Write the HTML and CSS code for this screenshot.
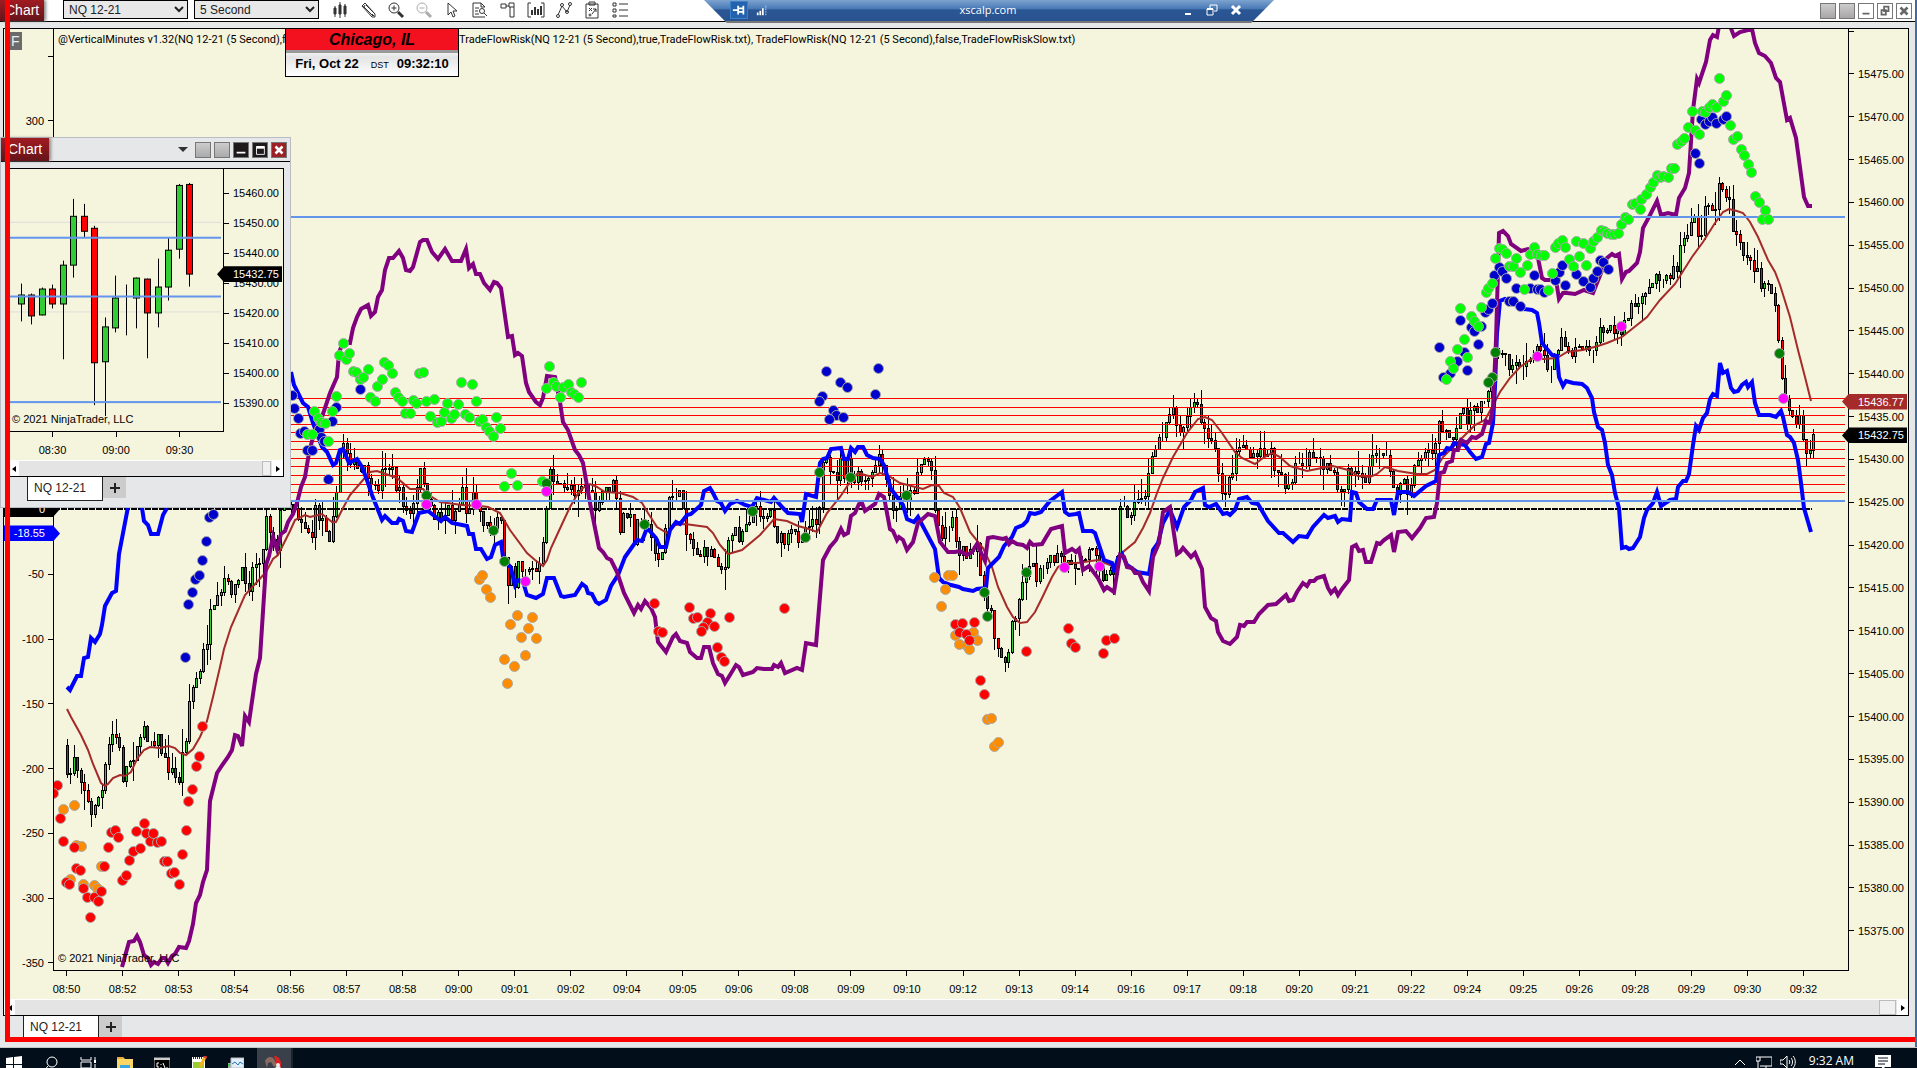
FILE: index.html
```html
<!DOCTYPE html>
<html lang="en">
  <head>
    <meta charset="UTF-8" />
    <meta name="viewport" content="width=device-width, initial-scale=1.0" />
    <title>NQ 12-21 Chart</title>
    <link rel="stylesheet" href="styles.css">
  </head>
  <body>
    <main class="window">
      <header class="titlebar">
        <span class="badge">Chart</span>
        <select class="instrument" aria-label="Instrument"><option>NQ 12-21</option></select>
        <select class="interval" aria-label="Interval"><option>5 Second</option></select>
        <div class="tools">
          <button aria-label="Bar style"><svg viewBox="0 0 18 18"><path d="M4 5v11M9 1v16M14 3v13" /><path d="M3 7h2v6H3zM8 4h2v9H8zM13 5h2v8h-2z" fill="#333" /></svg></button>
          <button aria-label="Drawing tools"><svg viewBox="0 0 18 18"><path d="M3 5l3-3 10 11v3h-3zM5 6l9 9M7 4l9 9M3 5l2 1 1-2M13 13l2 2" /></svg></button>
          <button aria-label="Zoom in"><svg viewBox="0 0 18 18"><circle cx="7" cy="7" r="5" /><path d="M4.500 7h5M7 4.500v5" /><path d="M11 11l5 5" stroke-width="3" /></svg></button>
          <button aria-label="Zoom out" disabled><svg viewBox="0 0 18 18"><circle cx="7" cy="7" r="5" /><path d="M4.500 7h5" /><path d="M11 11l5 5" stroke-width="3" /></svg></button>
          <button aria-label="Cursor"><svg viewBox="0 0 18 18"><path d="M5 2v12l3-3 2 5 2-1-2-5h4z" /></svg></button>
          <button aria-label="Data box"><svg viewBox="0 0 18 18"><path d="M14 6l-4-4H2v14h12M10 2v4h4M4 7h4M4 10h3M4 13h4" /><circle cx="11" cy="10" r="2.500" /><path d="M13 12l3 3" /></svg></button>
          <button aria-label="Chart trader"><svg viewBox="0 0 18 18"><path d="M10 2h5v14h-4V6h-1zM2 3h5v4H2zM7 5h3M11 6h4" /></svg></button>
          <button aria-label="Panel"><svg viewBox="0 0 18 18"><path d="M4 2H1v14h3M14 2h3v14h-3" /><path d="M5 14V9M8 14V6M11 14V8M14 14V5" stroke-width="2" /></svg></button>
          <button aria-label="Indicators"><svg viewBox="0 0 18 18"><path d="M3 14l4-9 5 6 3-7" /><circle cx="3" cy="15" r="1.500" /><circle cx="7" cy="4" r="1.500" /><circle cx="12" cy="11" r="1.500" /><circle cx="15" cy="3" r="1.500" /></svg></button>
          <button aria-label="Strategies"><svg viewBox="0 0 18 18"><path d="M3 3h12v14H3zM6 1h6v3H6zM6 7l3 3M9 7l-3 3M9 13l4-5M10 8h3v3" /><circle cx="7" cy="14" r="1" /></svg></button>
          <button aria-label="Properties"><svg viewBox="0 0 18 18"><path d="M2 2h3v3H2zM2 8h3v3H2zM2 14h3v2H2zM8 3h9M8 9h9M8 15h9" /></svg></button>
        </div>
        <div class="window-buttons light">
          <button class="blank" aria-label="Link instrument"></button>
          <button class="blank" aria-label="Link interval"></button>
          <button aria-label="Minimize"><svg viewBox="0 0 16 16"><path d="M4 11h8" stroke-width="2" /></svg></button>
          <button aria-label="Restore"><svg viewBox="0 0 16 16"><path d="M7 3h5v5H7zM4 7h5v5H4z" stroke-width="2" /></svg></button>
          <button aria-label="Close"><svg viewBox="0 0 16 16"><path d="M4 4l8 8M12 4l-8 8" stroke-width="3" /></svg></button>
        </div>
      </header>

      <section class="panel">
        <div class="grid">
          <div class="axis-left" id="leftAxis">
            <span class="panel-mark">F</span>
            <span class="tag tag-left zero">0</span>
            <span class="tag tag-left current">-18.55</span>
          </div>
          <div class="plot">
            <svg id="mainPlot" viewBox="54 29 1794 941" preserveAspectRatio="none"></svg>
            <p class="indicators">
              <span class="first">@VerticalMinutes v1.32(NQ 12-21 (5 Second),fa</span>
              <span>TradeFlowRisk(NQ 12-21 (5 Second),true,TradeFlowRisk.txt), TradeFlowRisk(NQ 12-21 (5 Second),false,TradeFlowRiskSlow.txt)</span>
            </p>
            <p class="copyright">© 2021 NinjaTrader, LLC</p>
          </div>
          <div class="axis-right" id="rightAxis">
            <span class="tag tag-right average">15436.77</span>
            <span class="tag tag-right last">15432.75</span>
          </div>
        </div>
        <div class="axis-bottom" id="timeAxis"></div>
        <div class="scroll">
          <button aria-label="Scroll left"><i class="arrow left"></i></button>
          <span class="thumb"></span>
          <button aria-label="Scroll right"><i class="arrow right"></i></button>
        </div>
      </section>

      <nav class="tabs">
        <button class="tab">NQ 12-21</button>
        <button class="add" aria-label="Add tab"><svg viewBox="0 0 12 12"><path d="M6 1v10M1 6h10" /></svg></button>
      </nav>

      <aside class="clock">
        <h2>Chicago, IL</h2>
        <p><b>Fri, Oct 22</b> <small>DST</small> <b>09:32:10</b></p>
      </aside>

      <section class="window floating">
        <header class="titlebar">
          <span class="badge">Chart</span>
          <div class="window-buttons dark">
            <i class="caret"></i>
            <button class="blank" aria-label="Link instrument"></button>
            <button class="blank" aria-label="Link interval"></button>
            <button aria-label="Minimize"><svg viewBox="0 0 16 16"><path d="M3 11h10" stroke-width="2" /></svg></button>
            <button aria-label="Maximize"><svg viewBox="0 0 16 16"><path d="M4 4h9v9H4z" /><path d="M4 5h9" stroke-width="3" /></svg></button>
            <button class="close" aria-label="Close"><svg viewBox="0 0 16 16"><path d="M4 4l8 8M12 4l-8 8" stroke-width="3" /></svg></button>
          </div>
        </header>
        <div class="panel">
          <div class="grid">
            <div class="plot">
              <svg id="smallPlot" viewBox="8 169 215 263" preserveAspectRatio="none"></svg>
              <p class="copyright">© 2021 NinjaTrader, LLC</p>
            </div>
            <div class="axis-right" id="smallRightAxis">
              <span class="tag tag-right last">15432.75</span>
            </div>
          </div>
          <div class="axis-bottom" id="smallTimeAxis"></div>
          <div class="scroll">
            <button aria-label="Scroll left"><i class="arrow left"></i></button>
            <span class="thumb"></span>
            <button aria-label="Scroll right"><i class="arrow right"></i></button>
          </div>
        </div>
        <nav class="tabs">
          <button class="tab">NQ 12-21</button>
          <button class="add" aria-label="Add tab"><svg viewBox="0 0 12 12"><path d="M6 1v10M1 6h10" /></svg></button>
        </nav>
      </section>

      <div class="frame"></div>

      <div class="remote-bar">
        <button class="pin" aria-label="Pin"><svg viewBox="0 0 16 16"><path d="M1 8h6M7 3v10M7 6h6M7 10h6M13 3v10" stroke-width="2" /></svg></button>
        <svg class="signal" viewBox="0 0 14 14"><path d="M2 13v-3M5 13V8M8 13V5" stroke-width="2" /><path d="M11.500 13V1" stroke-dasharray="1 1" /></svg>
        <span class="host">xscalp.com</span>
        <button aria-label="Minimize"><svg viewBox="0 0 12 12"><path d="M3 10h6" stroke-width="2" /></svg></button>
        <button aria-label="Restore"><svg viewBox="0 0 12 12"><path d="M4 4V1h7v6H8" /><path d="M1 5h6v6H1z" /><path d="M1 5h6" stroke-width="2" /></svg></button>
        <button aria-label="Close"><svg viewBox="0 0 12 12"><path d="M2 2l8 8M10 2l-8 8" stroke-width="3" /></svg></button>
      </div>
    </main>

    <footer class="taskbar">
      <div class="apps">
        <button aria-label="Start"><svg viewBox="0 0 16 16"><path d="M0 2l7-1v7H0zM8 1l8-1v8H8zM0 9h7v7l-7-1zM8 9h8v7H8z" fill="#fff" /></svg></button>
        <button aria-label="Search"><svg viewBox="0 0 16 16"><circle cx="9" cy="6" r="5" class="line" /><path d="M5 10l-5 6" class="line" /></svg></button>
        <button aria-label="Task view"><svg viewBox="0 0 16 16"><path d="M1 1v3h10V1M1 6h10v6H1zM1 16v-2h10v2M15 1v3M15 8v8" class="line" /><path d="M14 4h2v3h-2z" fill="#fff" /></svg></button>
        <button aria-label="File Explorer"><svg viewBox="0 0 16 16"><path d="M0 1h6l2 2h8v13H0z" fill="#fbd667" /><path d="M0 1h6l1 2H0z" fill="#e6a93a" /><path d="M3 9h10v7h-3v-4H6v4H3z" fill="#35a7e2" /></svg></button>
        <button aria-label="Command Prompt"><svg viewBox="0 0 16 16"><path d="M0 2h16v14H0z" fill="#000" stroke="#bbb" /><path d="M0 2h16v2H0z" fill="#ccc" /><path d="M5 7H3v4h2M7 8v1M7 11v1M9 7l2 5M12 12h2" stroke="#fff" fill="none" /></svg></button>
        <button aria-label="Notepad"><svg viewBox="0 0 16 16"><path d="M1 1h13v15H1z" fill="#fff" /><path d="M2 6h11v10H2z" fill="#9c3" /><path d="M2 2h11" stroke="#333" stroke-dasharray="1 1" stroke-width="2" /><path d="M14 1l-5 10" stroke="#f5b21b" stroke-width="3" /><path d="M15 0l-1 2" stroke="#d33" stroke-width="3" /></svg></button>
        <button aria-label="Monitor"><svg viewBox="0 0 16 16"><path d="M0 7h4v9H0z" fill="#9aa" /><path d="M0 8h2v2H0z" fill="#3c3" /><path d="M3 2h13v10H3z" fill="#dfeefa" stroke="#bbb" /><path d="M4 8l3-2 3 3 2-3 3 2" stroke="#27a" fill="none" /><path d="M5 14h9v2H5z" fill="#ccc" /></svg></button>
        <button class="running" aria-label="NinjaTrader"><svg viewBox="0 0 16 16"><path d="M0 5c2-5 7-5 9-2l3 6-3 2-3-5-3 1-1 5z" fill="#8b6a60" /><path d="M9 0c5 0 8 5 7 11l-3 2z" fill="#d22" /><circle cx="13" cy="9" r="2" fill="#eee" /><circle cx="13" cy="13" r="3" fill="#eee" /></svg></button>
      </div>
      <div class="tray">
        <svg viewBox="0 0 16 16"><path d="M3 11l5-5 5 5" class="line" /></svg>
        <svg viewBox="0 0 16 16"><path d="M4 3h12v9H4M10 12v4M6 15h9M0 3h4v4H0zM2 7v9" class="line" /></svg>
        <svg viewBox="0 0 16 16"><path d="M0 6h3l4-4v12l-4-4H0zM9 6c1 1 1 3 0 4M11 4c2 2 2 6 0 8M13 2c3 3 3 9 0 12" class="line" /></svg>
        <time>9:32 AM</time>
        <svg class="notice" viewBox="0 0 16 16"><path d="M0 1h16v12h-6l-3 3v-3H0z" fill="#fff" /><path d="M3 4h10M3 7h10M3 10h7" stroke="#020e1a" /></svg>
      </div>
    </footer>

    <script src="chart.js"></script>
  </body>
</html>
```
FILE: styles.css
```css
* {
  box-sizing: border-box;
}
body {
  margin: 0;
  height: 100vh;
  display: flex;
  flex-direction: column;
  overflow: hidden;
  font-family: "Liberation Sans", Arial, sans-serif;
  font-size: 11px;
  color: #000;
  background: #020e1a;
}
p,
h2 {
  margin: 0;
}
button {
  border: none;
  padding: 0;
  background: none;
  font: inherit;
}
svg {
  display: block;
}

/* chart windows */
.window {
  position: relative;
  flex: 1;
  min-height: 0;
  display: flex;
  flex-direction: column;
  background: #e6e7e8;
  border-right: 2px solid #3d6f9e;
}
.titlebar {
  display: flex;
  align-items: center;
  height: 22px;
  background: #fff;
  border-bottom: 1px solid #000;
}
.badge {
  width: 44px;
  height: 21px;
  padding-left: 5px;
  line-height: 20px;
  font-size: 14px;
  color: #fff;
  background: linear-gradient(#a01c22, #64141a);
  box-shadow: 2px 0 3px #888;
}
.titlebar select {
  height: 19px;
  margin-right: 6px;
  margin-bottom: 2px;
  padding: 0 1px;
  border: 1px solid #000;
  border-radius: 0;
  background: #e8e8e8;
  font-family: inherit;
  font-size: 12px;
  color: #222;
}
.titlebar .instrument {
  width: 125px;
  margin-left: 19px;
}
.titlebar .interval {
  width: 125px;
}
.tools {
  display: flex;
  gap: 10px;
  margin-left: 6px;
  padding-bottom: 1px;
}
.tools svg {
  width: 18px;
  height: 18px;
  fill: none;
  stroke: #333;
}
.tools button:disabled {
  opacity: 0.4;
}
.window-buttons {
  display: flex;
  align-items: center;
  gap: 3px;
  margin-left: auto;
  padding-right: 3px;
}
.window-buttons button {
  width: 16px;
  height: 16px;
  border: 1px solid #777;
}
.window-buttons svg {
  width: 14px;
  height: 14px;
  fill: none;
  stroke: #666;
}
.window-buttons .blank {
  background: linear-gradient(#ccc, #a8a5a6);
}
.dark button {
  background: #1e191b;
}
.dark svg {
  stroke: #fff;
}
.dark .blank {
  background: linear-gradient(#ccc, #aaa);
}
.dark .close {
  background: #9b1f25;
}
.caret {
  border: 5px solid transparent;
  border-top-color: #333;
  border-bottom: none;
  margin-right: 4px;
}

.panel {
  flex: 1;
  min-height: 0;
  display: flex;
  flex-direction: column;
  margin: 6px 6px 0 3px;
  border: 1px solid #000;
  background: #f5f4dd;
}
.grid {
  flex: 1;
  min-height: 0;
  display: flex;
}
.plot {
  flex: 1;
  position: relative;
  min-width: 0;
  border: 1px solid #000;
  border-top: none;
}
.plot svg {
  position: absolute;
  width: 100%;
  height: 100%;
}
.indicators {
  position: absolute;
  top: 5px;
  left: 4px;
  display: flex;
  font-family: Roboto, "Liberation Sans", sans-serif;
  line-height: 12px;
  white-space: nowrap;
}
.indicators .first {
  width: 401px;
}
.copyright {
  position: absolute;
  left: 4px;
  bottom: 5px;
  line-height: 13px;
}

/* axes */
.axis-left,
.axis-right {
  position: relative;
  display: flex;
  flex-direction: column;
  justify-content: space-between;
}
.axis-left {
  width: 49px;
  padding: 27px 0 8px;
  align-items: flex-end;
}
.axis-right {
  width: 59px;
  padding: 2px 0 40px;
}
.mark {
  display: flex;
  align-items: center;
  gap: 4px;
  height: 0;
}
.mark::before {
  content: "";
  width: 5px;
  height: 1px;
  background: #000;
}
.axis-left .mark {
  flex-direction: row-reverse;
}
.axis-bottom {
  display: flex;
  justify-content: space-between;
  height: 28px;
  padding: 0 104px 0 62px;
}
.axis-bottom .mark {
  width: 1px;
  height: 25px;
  flex-direction: column;
  gap: 7px;
}
.axis-bottom .mark::before {
  width: 1px;
  height: 5px;
}
.tag {
  position: absolute;
  z-index: 1;
  height: 16px;
  line-height: 16px;
  color: #fff;
  background: #000;
}
.tag-right {
  left: -7px;
  right: 1px;
  padding-left: 16px;
  clip-path: polygon(0 50%, 7px 0, 100% 0, 100% 100%, 7px 100%);
}
.tag-left {
  left: 0;
  right: -7px;
  padding-right: 15px;
  text-align: right;
  clip-path: polygon(0 0, 49px 0, 100% 50%, 49px 100%, 0 100%);
}
.average {
  top: 38.7%;
  background: #a52a2a;
}
.last {
  top: 42.3%;
}
.zero {
  top: 50.1%;
}
.current {
  top: 52.7%;
  background: #0000ff;
}
.panel-mark {
  position: absolute;
  top: 3px;
  left: 4px;
  width: 14px;
  height: 18px;
  padding-left: 3px;
  line-height: 18px;
  font-size: 14px;
  color: #eee;
  background: #6b6b6b;
}

.scroll {
  display: flex;
  height: 16px;
  background: #e4e4e4;
  border-top: 1px solid #fff;
}
.scroll button {
  display: flex;
  align-items: center;
  justify-content: center;
  width: 11px;
  background: #fff;
}
.thumb {
  width: 17px;
  margin: 0 1px 0 auto;
  border: 1px solid #bbb;
  background: #f0f0f0;
}
.floating .thumb {
  width: 9px;
}
.arrow {
  border: 3px solid transparent;
}
.arrow.left {
  border-left: none;
  border-right: 4px solid #000;
}
.arrow.right {
  border-right: none;
  border-left: 4px solid #000;
}

.tabs {
  display: flex;
  align-items: flex-start;
  height: 31px;
  padding-left: 23px;
}
.tab {
  width: 76px;
  height: 24px;
  padding: 0 0 2px 6px;
  border: 1px solid #222;
  border-top: none;
  background: #fff;
  font-size: 12px;
  text-align: left;
  color: #222;
}
.add {
  display: flex;
  align-items: center;
  justify-content: center;
  width: 23px;
  height: 21px;
  background: #ccc;
}
.add svg {
  width: 12px;
  height: 12px;
  stroke: #222;
  stroke-width: 2;
}

/* overlays */
.clock {
  position: absolute;
  top: 28px;
  left: 285px;
  width: 174px;
  border: 1px solid #000;
  background: linear-gradient(#ddd, #fff 40%, #e4e4e4 60%, #fff);
  text-align: center;
}
.clock h2 {
  background: #f3111f;
  border-bottom: 3px solid #999;
  font-size: 16px;
  font-style: italic;
  line-height: 21px;
}
.clock p {
  display: flex;
  justify-content: center;
  align-items: baseline;
  gap: 12px;
  font-size: 13px;
  line-height: 21px;
}
.clock small {
  font-size: 9px;
  margin-right: -4px;
}
.floating {
  position: absolute;
  top: 137px;
  left: 0;
  width: 291px;
  height: 371px;
  border: 1px solid #b9bcc4;
  z-index: 2;
}
.floating .titlebar {
  height: 24px;
  background: #e6e7e8;
}
.floating .badge {
  width: 48px;
  height: 23px;
  padding-left: 7px;
  line-height: 23px;
}
.floating .panel {
  margin-left: 6px;
}
.floating .plot {
  border-left: none;
}
.floating .axis-right {
  padding: 24px 0 29px;
}
.floating .axis-bottom {
  padding: 0 103px 0 44px;
}
.floating .last {
  top: 37%;
}
.floating .tabs {
  height: 30px;
  padding-left: 26px;
}
.frame {
  position: absolute;
  inset: 0 0 5px 5px;
  border-left: 5px solid #f00;
  border-bottom: 5px solid #f00;
  pointer-events: none;
  z-index: 3;
}
.remote-bar {
  position: absolute;
  top: 0;
  left: 704px;
  width: 570px;
  height: 23px;
  display: flex;
  align-items: center;
  gap: 12px;
  padding: 0 32px 4px 26px;
  color: #fff;
  background: linear-gradient(#7da3cf, #4677b4 40%, #2a5794 42%, #28528f 92%, #777 93%);
  clip-path: polygon(0 0, 100% 0, 96% 100%, 4% 100%);
}
.remote-bar svg {
  width: 12px;
  height: 12px;
  fill: none;
  stroke: #fff;
}
.remote-bar .pin {
  padding: 1px;
  border: 1px solid #3a80cc;
  background: #2462ad;
}
.remote-bar .pin svg {
  width: 14px;
  height: 14px;
}
.remote-bar .signal {
  margin-left: -4px;
}
.host {
  flex: 1;
  padding-left: 26px;
  text-align: center;
  font-family: "Open Sans", sans-serif;
  font-size: 11px;
  line-height: 16px;
}

/* taskbar */
.taskbar {
  height: 21px;
  overflow: hidden;
  display: flex;
  align-items: flex-start;
  justify-content: space-between;
  background: #020e1a;
  border-top: 1px solid #c4c6c8;
}
.taskbar svg {
  width: 16px;
  height: 16px;
}
.taskbar .line {
  fill: none;
  stroke: #fff;
}
.apps {
  display: flex;
  gap: 5px;
}
.apps button {
  width: 32px;
  height: 24px;
  padding: 7px 8px 0;
}
.apps button:first-child {
  width: 30px;
  padding-left: 6px;
}
.apps .running {
  width: 36px;
  background: #3a404a;
  border-right: 2px solid #1b2530;
}
.tray {
  display: flex;
  gap: 8px;
  padding: 6px 26px 0 0;
}
.tray time {
  margin: 0 13px 0 5px;
  font-family: "Open Sans", sans-serif;
  font-size: 12px;
  line-height: 14px;
  color: #fff;
}
```
FILE: chart.js
```javascript
const SVG_NS = "http://www.w3.org/2000/svg";

// closing levels along the session, the bars are built between them
const price = "67,745 67,781 69,786 73,750 77,766 83,781 87,797 91,819 95,802 102,792 105,773 108,750 112,734 118,739 123,777 129,761 136,750 138,735 142,750 144,723 147,735 153,741 157,735 160,743 164,761 172,772 175,777 178,786 182,757 186,735 188,706 192,690 196,679 200,674 202,659 207,639 209,616 213,614 217,603 221,596 223,576 228,587 235,589 237,583 243,572 249,585 252,569 257,560 263,551 266,510 269,525 277,545 279,518 285,505 293,500 297,513 304,523 307,528 312,535 315,510 318,515 325,522 329,538 333,510 337,497 340,450 343,440 348,453 354,465 360,473 367,470 372,493 377,490 380,480 385,462 392,470 397,490 402,497 406,512 412,513 415,500 420,473 423,470 427,503 433,515 438,513 443,517 448,507 453,517 460,500 462,482 465,510 470,513 472,483 477,503 482,518 487,525 492,528 497,513 501,527 504,558 508,583 511,560 515,580 518,557 523,570 528,567 535,572 539,570 543,547 547,497 549,467 553,477 557,487 563,490 570,483 575,490 582,483 588,487 595,507 598,513 603,490 613,485 617,497 620,537 624,513 630,517 634,538 640,510 645,520 652,540 658,557 663,553 668,503 675,490 682,500 687,530 693,547 702,555 710,550 717,557 720,567 725,568 730,537 735,528 740,537 746,520 753,513 760,510 765,517 772,510 777,537 785,542 792,533 799,537 803,532 809,520 816,518 820,500 823,467 827,463 830,477 837,475 841,460 844,473 847,463 852,482 857,477 865,483 873,477 878,450 882,470 887,483 891,507 898,513 902,483 907,497 913,493 918,467 925,458 931,462 934,507 940,523 942,537 948,522 954,520 957,548 963,550 970,555 977,550 981,580 985,590 988,613 992,618 995,640 1000,648 1005,660 1008,663 1010,630 1015,613 1019,597 1023,583 1029,560 1037,577 1042,560 1048,563 1057,557 1065,563 1070,567 1075,573 1079,565 1087,557 1092,543 1098,553 1104,580 1110,573 1115,567 1118,540 1121,503 1127,513 1133,510 1139,497 1145,493 1149,473 1153,458 1159,437 1163,432 1167,413 1173,410 1180,427 1188,417 1194,400 1198,410 1203,427 1210,442 1217,457 1220,487 1225,492 1230,480 1235,453 1243,442 1248,453 1253,460 1260,453 1272,453 1275,468 1280,467 1283,483 1292,483 1297,463 1305,472 1309,447 1315,457 1322,468 1327,463 1332,473 1338,487 1343,495 1347,467 1352,477 1358,467 1360,487 1367,475 1373,457 1377,447 1385,453 1390,473 1395,490 1402,483 1407,490 1413,477 1417,457 1427,453 1435,453 1439,422 1445,433 1450,438 1457,433 1462,407 1467,427 1473,407 1480,407 1485,393 1492,380 1495,353 1500,347 1507,352 1510,367 1517,360 1525,370 1535,350 1543,353 1550,367 1557,347 1563,338 1572,353 1578,340 1587,350 1597,340 1603,328 1617,333 1625,322 1633,303 1640,307 1650,287 1658,273 1668,275 1677,267 1679,243 1685,237 1692,213 1697,230 1702,230 1704,213 1717,203 1719,180 1724,197 1730,200 1732,225 1740,237 1746,257 1755,267 1761,283 1769,280 1775,307 1779,347 1783,397 1787,403 1793,423 1801,420 1805,453 1808,455 1812,437 1816,435";

const average = "67,709 71,717 81,735 88,750 93,764 101,783 105,786 108,784 113,778 120,775 125,776 131,772 137,759 144,750 150,747 160,748 169,746 175,748 180,753 186,755 193,749 200,737 207,721 213,697 220,667 224,649 231,627 245,595 257,582 266,572 273,559 278,555 290,531 295,520 305,515 310,517 322,514 332,522 336,522 342,510 350,495 363,480 370,472 377,471 383,473 397,478 410,489 423,489 432,497 440,502 462,505 480,506 488,507 500,513 510,530 527,553 535,560 543,566 547,560 551,548 557,535 563,522 570,507 577,495 583,488 590,484 597,487 605,492 620,493 633,497 642,503 648,513 657,527 667,533 675,525 685,524 707,527 713,533 720,545 728,554 742,550 760,535 774,519 787,521 798,526 809,529 817,532 827,513 840,497 850,482 858,473 872,477 880,473 887,475 900,483 923,489 932,485 939,486 944,493 953,497 960,508 970,532 983,548 992,567 998,587 1007,607 1013,617 1020,623 1027,622 1035,612 1042,598 1052,577 1058,567 1065,563 1077,563 1098,560 1105,563 1115,567 1123,552 1135,542 1143,528 1150,513 1157,493 1163,478 1173,457 1187,433 1198,419 1205,417 1212,420 1222,433 1235,452 1242,458 1255,464 1263,458 1272,453 1280,457 1290,466 1307,471 1322,468 1333,466 1348,470 1358,476 1370,477 1377,474 1385,467 1398,471 1417,474 1427,474 1435,470 1443,457 1460,440 1475,425 1485,420 1492,407 1500,392 1510,378 1520,367 1533,358 1543,359 1557,358 1567,352 1583,350 1598,346 1607,343 1622,337 1637,325 1647,317 1653,309 1660,300 1675,284 1692,257 1703,242 1715,223 1723,212 1729,209 1737,211 1743,213 1750,222 1758,237 1768,260 1775,272 1780,285 1790,317 1798,350 1805,377 1811,401";

const slowRisk = "122,967 129,942 134,941 137,936 140,942 144,955 148,958 151,965 154,962 158,964 162,958 165,958 168,963 172,956 175,954 179,947 186,948 189,941 193,924 196,903 200,895 203,882 207,870 210,801 217,773 223,764 228,757 232,750 235,735 238,736 242,746 245,716 249,722 256,674 260,658 266,565 269,556 273,537 277,549 281,534 285,531 288,522 293,514 297,503 301,487 305,477 309,453 313,437 317,425 322,417 330,393 337,377 339,353 343,342 350,343 353,328 357,317 361,309 368,305 371,316 375,312 378,297 382,290 385,270 389,258 393,258 399,251 403,258 406,270 410,271 413,267 420,242 423,240 427,240 432,252 438,259 445,249 452,261 461,261 466,249 469,268 473,264 476,274 480,274 484,283 490,290 494,282 497,283 501,288 508,337 512,336 515,355 518,353 522,356 526,383 529,392 536,402 540,405 543,398 547,376 555,377 560,402 563,422 568,430 575,450 579,455 583,463 590,503 599,548 603,552 607,558 611,560 617,572 624,593 634,613 638,605 641,609 645,601 651,608 655,617 658,642 666,652 673,637 676,634 680,641 687,643 690,652 697,658 701,658 704,647 709,647 713,663 718,674 722,676 725,683 730,675 736,665 739,667 743,675 753,672 757,668 764,669 772,669 774,665 778,667 781,663 785,673 797,668 802,670 806,643 816,645 823,560 830,547 836,540 841,529 844,535 848,533 851,516 855,513 859,504 862,503 865,511 875,504 879,494 884,497 890,529 893,531 897,540 899,537 903,540 907,550 913,542 918,523 928,514 935,516 940,542 948,552 955,552 960,551 967,555 972,552 977,544 985,561 988,538 993,537 1003,539 1006,538 1009,544 1012,541 1017,544 1023,545 1027,548 1030,542 1033,545 1042,544 1051,529 1062,526 1065,553 1072,549 1076,552 1079,549 1083,570 1089,566 1098,578 1104,590 1107,587 1114,592 1120,555 1124,557 1127,567 1132,568 1135,573 1139,573 1143,582 1149,591 1153,557 1159,543 1163,512 1170,507 1177,554 1180,552 1183,548 1191,557 1195,553 1202,569 1205,607 1211,618 1216,621 1218,632 1223,641 1230,644 1237,637 1240,625 1244,626 1247,622 1254,622 1259,614 1268,605 1276,604 1286,595 1289,601 1293,600 1297,592 1303,583 1307,586 1310,581 1314,581 1317,578 1324,576 1328,588 1331,593 1335,589 1338,595 1342,589 1349,580 1352,547 1356,545 1359,551 1363,550 1366,562 1371,562 1377,543 1380,544 1384,540 1391,535 1394,552 1398,532 1406,531 1412,538 1420,528 1426,518 1434,517 1437,503 1440,473 1444,472 1447,463 1452,461 1454,450 1458,450 1461,440 1467,443 1472,437 1476,438 1482,434 1486,421 1490,423 1493,407 1496,340 1498,270 1499,233 1503,231 1508,236 1511,244 1521,251 1528,249 1537,253 1542,278 1545,280 1556,280 1559,299 1563,293 1567,293 1575,294 1584,290 1593,293 1603,268 1607,258 1612,254 1615,256 1619,254 1622,279 1626,272 1629,271 1637,263 1640,252 1643,228 1650,215 1657,201 1661,215 1668,213 1676,215 1679,198 1685,188 1689,173 1693,110 1697,79 1699,83 1706,62 1710,40 1713,35 1717,37 1719,26 1730,26 1734,36 1740,32 1752,29 1755,43 1759,53 1765,56 1771,63 1776,78 1780,82 1787,120 1790,118 1796,138 1799,160 1804,197 1808,206 1812,206";

const fastRisk = [
  "67,687 70,690 77,676 81,676 84,658 88,657 91,638 95,642 100,634 102,625 105,606 112,593 116,591 119,554 128,507",
  "142,508 144,521 148,525 151,534 158,534 163,515 167,508",
  "291,372 294,385 303,403 308,407 313,423 322,447 327,452 333,465 336,463 340,450 343,449 349,463 357,459 362,467 367,480 372,495 382,520 385,516 392,523 397,523 399,519 403,521 406,531 412,532 419,513 428,511 441,521 445,517 452,523 467,526 469,534 473,534 476,549 481,549 487,559 491,557 495,545 501,542 503,557 511,568 515,585 518,580 523,582 527,595 536,598 543,594 547,578 554,578 561,596 564,597 575,595 582,584 586,587 588,593 592,594 596,602 599,604 606,600 611,586 618,575 625,557 637,540 642,541 647,528 656,538 660,547 666,547 670,530 676,522 680,524 687,515 691,514 701,505 704,491 710,488 713,493 717,501 721,503 725,511 730,504 737,501 745,505 752,507 757,498 771,502 774,498 783,508 788,513 800,514 802,522 806,494 816,497 820,463 823,459 827,458 831,449 841,448 844,459 848,459 851,448 855,452 858,447 863,447 867,455 873,458 880,459 884,465 891,489 897,497 903,505 907,519 914,522 918,517 935,549 939,578 943,582 951,585 959,587 963,589 973,591 977,589 986,588 988,568 999,557 1004,546 1012,537 1016,528 1023,525 1027,521 1030,513 1035,514 1041,512 1050,501 1062,492 1065,512 1069,515 1076,514 1079,513 1083,531 1092,531 1095,533 1104,560 1112,563 1114,572 1118,558 1122,554 1127,565 1137,572 1149,574 1153,550 1158,543 1163,523 1170,510 1177,527 1184,507 1191,500 1195,492 1203,488 1205,505 1209,507 1216,504 1223,514 1227,513 1230,515 1235,510 1239,499 1247,497 1252,503 1258,504 1268,521 1279,533 1283,533 1293,542 1299,536 1307,537 1313,527 1324,515 1328,518 1335,516 1338,522 1342,519 1350,520 1352,492 1356,493 1359,502 1367,509 1373,509 1377,500 1391,500 1394,515 1398,492 1408,492 1414,496 1426,486 1436,481 1439,455 1444,453 1447,448 1451,449 1454,443 1465,445 1470,452 1476,459 1482,457 1486,444 1489,443 1493,423 1495,387 1497,333 1500,301 1505,299 1513,302 1523,309 1532,310 1537,313 1539,323 1542,343 1552,355 1557,356 1559,377 1563,386 1566,381 1573,383 1582,384 1587,388 1592,398 1594,412 1598,427 1602,430 1605,443 1608,465 1612,475 1615,493 1619,508 1622,548 1626,547 1629,549 1633,548 1640,537 1644,518 1647,510 1653,503 1657,492 1661,506 1670,500 1676,499 1678,487 1683,481 1686,481 1689,474 1693,445 1696,426 1699,430 1703,418 1707,413 1710,399 1713,394 1717,396 1720,363 1723,373 1727,371 1731,388 1734,392 1738,391 1742,385 1746,382 1748,387 1752,382 1755,403 1759,415 1770,415 1776,417 1781,411 1783,417 1787,435 1790,437 1794,443 1798,460 1801,483 1804,508 1811,532",
];

const dots = [
  ["#ff8c00", "63,809 74,805 76,845 81,846 70,879 83,884 94,885 97,888 101,866 479,579 482,575 486,589 490,597 517,615 532,617 510,624 528,628 521,637 536,638 504,659 525,655 514,666 507,683 934,577 948,575 952,575 945,589 941,606 955,635 973,632 959,644 966,645 969,649 977,640 987,719 991,718 994,746 998,742"],
  ["#ff0000", "57,785 53,793 60,818 63,841 74,847 76,868 80,870 66,882 69,884 83,888 87,897 94,897 98,901 101,891 90,917 104,866 108,847 111,832 115,830 118,837 122,880 126,875 129,860 133,851 140,848 136,831 144,823 146,833 150,841 153,833 157,842 161,841 164,861 167,861 171,873 174,872 179,884 182,854 186,830 188,801 192,789 196,766 199,756 202,726 654,603 658,631 662,632 689,607 693,618 697,617 710,613 707,622 703,627 701,631 714,626 729,617 717,647 721,657 724,661 784,608 955,624 962,623 974,622 959,632 966,634 969,640 1026,651 1068,628 1071,643 1075,647 1106,640 1114,638 1103,653 980,680 984,694"],
  ["#0000cd", "185,657 188,604 192,592 195,579 199,575 202,560 206,541 209,517 213,514 292,395 294,408 298,418 300,433 304,431 307,450 312,450 319,429 321,437 324,441 336,407 332,421 328,479 360,389 826,371 822,396 819,401 840,382 847,387 878,368 875,394 833,410 836,415 829,419 843,417 1439,347 1460,320 1478,344 1464,352 1467,370 1457,361 1450,373 1443,377 1471,327 1474,331 1481,326 1485,312 1488,309 1492,303 1494,275 1499,267 1502,271 1506,278 1509,301 1513,301 1520,306 1516,288 1530,288 1534,275 1537,289 1540,289 1544,292 1555,280 1559,272 1562,265 1565,285 1576,274 1583,281 1590,287 1593,278 1597,271 1600,260 1603,262 1608,269 1695,153 1699,163 1701,119 1705,124 1709,121 1712,117 1716,123 1723,119 1726,116"],
  ["#00ff00", "343,343 339,355 346,359 349,353 353,371 356,372 360,379 363,377 368,369 370,397 375,401 377,386 382,379 384,362 388,365 392,373 395,392 398,397 402,401 405,413 410,413 413,400 416,403 419,373 423,372 426,401 434,399 430,416 437,422 441,421 444,412 447,403 451,418 454,414 458,404 461,382 472,384 465,414 469,417 476,401 479,421 482,419 486,427 489,431 493,436 496,417 500,428 504,486 511,473 517,485 542,481 549,366 546,388 553,382 556,386 560,397 563,387 568,384 571,392 574,394 578,397 581,382 332,411 336,396 314,411 318,418 321,422 325,423 328,441 307,434 312,434 1460,308 1481,307 1471,316 1474,321 1478,326 1464,339 1457,349 1467,357 1450,361 1453,368 1446,379 1486,292 1488,288 1492,283 1495,258 1499,248 1502,249 1506,253 1509,266 1513,266 1516,258 1520,272 1527,265 1530,254 1534,247 1537,254 1541,255 1544,255 1524,289 1548,290 1552,273 1555,247 1558,243 1562,240 1565,247 1569,259 1573,266 1576,241 1579,256 1583,243 1586,265 1590,248 1593,241 1597,237 1601,230 1604,231 1607,233 1611,234 1614,234 1618,233 1621,224 1625,217 1628,219 1632,204 1635,203 1640,209 1641,199 1646,194 1650,187 1653,182 1657,175 1660,177 1663,176 1668,177 1671,168 1674,168 1677,144 1681,141 1684,138 1688,127 1692,111 1695,130 1699,134 1702,111 1705,112 1709,107 1712,104 1716,107 1719,78 1723,101 1726,95 1730,125 1733,139 1737,136 1741,149 1744,155 1748,164 1751,172 1755,196 1759,202 1765,210 1762,219 1768,219"],
  ["#008000", "426,495 493,530 504,561 546,483 644,524 752,511 805,537 819,472 850,477 906,495 984,592 987,616 1026,572 1495,352 1492,377 1488,382 1779,353"],
  ["#ff00ff", "426,504 476,504 546,491 525,581 1064,567 1099,566 1537,356 1621,326 1783,398"],
];

// x, body top, body bottom, high, low, up
const fiveMinute = [
  [21, 295, 304, 284, 321, 1],
  [31, 295, 316, 294, 324, 0],
  [42, 289, 315, 288, 315, 1],
  [52, 289, 304, 285, 308, 0],
  [63, 265, 304, 261, 359, 1],
  [73, 216, 265, 199, 277, 1],
  [84, 216, 231, 204, 237, 0],
  [94, 228, 363, 226, 405, 0],
  [105, 327, 362, 318, 416, 1],
  [115, 298, 328, 276, 332, 1],
  [126, 298, 298, 285, 335, 1],
  [136, 278, 298, 278, 328, 1],
  [147, 279, 313, 279, 358, 0],
  [158, 287, 313, 259, 327, 1],
  [168, 250, 287, 238, 300, 1],
  [179, 185, 249, 184, 258, 1],
  [189, 184, 274, 183, 286, 0],
];

function draw(svg, name, attributes) {
  const element = document.createElementNS(SVG_NS, name);
  for (const key in attributes) {
    element.setAttribute(key, attributes[key]);
  }
  svg.appendChild(element);
}

function toPoints(text) {
  return text.split(" ").map((pair) => pair.split(",").map(Number));
}

function drawLine(svg, points, color, width) {
  draw(svg, "polyline", {
    points,
    fill: "none",
    stroke: color,
    "stroke-width": width,
  });
}

function drawLevel(svg, y, x2, color, height) {
  draw(svg, "rect", { x: 0, y, width: x2, height, fill: color });
}

function drawCandle(svg, x, top, bottom, high, low, up, half) {
  draw(svg, "rect", { x, y: high, width: 1, height: low - high + 1 });
  draw(svg, "rect", {
    x: x - half + 0.5,
    y: top + 0.5,
    width: half * 2,
    height: bottom - top,
    fill: up ? "#32cd32" : "#ff0000",
    stroke: "#000",
  });
}

function levelAt(points, x) {
  for (let i = 1; i < points.length; i++) {
    if (points[i][0] >= x) {
      const [x1, y1] = points[i - 1];
      const [x2, y2] = points[i];
      return x2 === x1 ? y2 : y1 + ((y2 - y1) * (x - x1)) / (x2 - x1);
    }
  }
  return points[points.length - 1][1];
}

let seed = 7;
function random() {
  seed = (seed * 16807) % 2147483647;
  return seed / 2147483647;
}

function drawBars(svg) {
  const points = toPoints(price);
  let open = 745;
  for (let x = 67; x < 1817; x += 3.5) {
    const close = Math.round(levelAt(points, x) + (random() - 0.5) * 14);
    const top = Math.min(open, close);
    const bottom = Math.max(open, close);
    const high = top - Math.floor(random() * random() * 24);
    const low = bottom + Math.floor(random() * random() * 24);
    drawCandle(svg, Math.floor(x), top, bottom, high, low, close < open, 1);
    open = close;
  }
}

function addMarks(id, labels) {
  const axis = document.getElementById(id);
  labels.forEach((label) => {
    const mark = document.createElement("span");
    mark.className = "mark";
    mark.textContent = label;
    axis.appendChild(mark);
  });
}

const main = document.getElementById("mainPlot");
drawBars(main);
[398, 407, 415, 424, 432, 441, 449, 458, 466, 475, 484, 492].forEach((y) => {
  drawLevel(main, y, 1845, "#ff0000", 1);
});
draw(main, "path", {
  d: "M54 509H1812",
  stroke: "#000",
  "stroke-width": 2,
  "stroke-dasharray": "6 1",
});
drawLine(main, average, "#a52a2a", 2);
fastRisk.forEach((points) => drawLine(main, points, "#0000ff", 4));
drawLine(main, slowRisk, "#800080", 4);
drawLevel(main, 216, 1845, "#6495ed", 2);
drawLevel(main, 500, 1845, "#6495ed", 2);
dots.forEach(([color, points]) => {
  toPoints(points).forEach(([cx, cy]) => {
    draw(main, "circle", {
      cx: cx + 0.5,
      cy: cy + 0.5,
      r: 5,
      fill: color,
      stroke: "#a9a9a9",
    });
  });
});

const small = document.getElementById("smallPlot");
drawLevel(small, 222, 221, "#ddd", 1);
drawLevel(small, 312, 221, "#ddd", 1);
fiveMinute.forEach((bar) => drawCandle(small, ...bar, 3));
[237, 296, 402].forEach((y) => drawLevel(small, y, 221, "#6495ed", 2));

const prices = [""];
for (let value = 15475; value >= 15375; value -= 5) {
  prices.push(value.toFixed(2));
}
addMarks("rightAxis", prices);
addMarks("leftAxis", ["", "300", "", "", "", "", "", "", "", "-50", "-100", "-150", "-200", "-250", "-300", "-350"].filter((label, i) => i !== 2));
addMarks("timeAxis", [
  "08:50", "08:52", "08:53", "08:54", "08:56", "08:57", "08:58", "09:00",
  "09:01", "09:02", "09:04", "09:05", "09:06", "09:08", "09:09", "09:10",
  "09:12", "09:13", "09:14", "09:16", "09:17", "09:18", "09:20", "09:21",
  "09:22", "09:24", "09:25", "09:26", "09:28", "09:29", "09:30", "09:32",
]);
addMarks("smallRightAxis", [
  "15460.00", "15450.00", "15440.00", "15430.00",
  "15420.00", "15410.00", "15400.00", "15390.00",
]);
addMarks("smallTimeAxis", ["08:30", "09:00", "09:30"]);
```
